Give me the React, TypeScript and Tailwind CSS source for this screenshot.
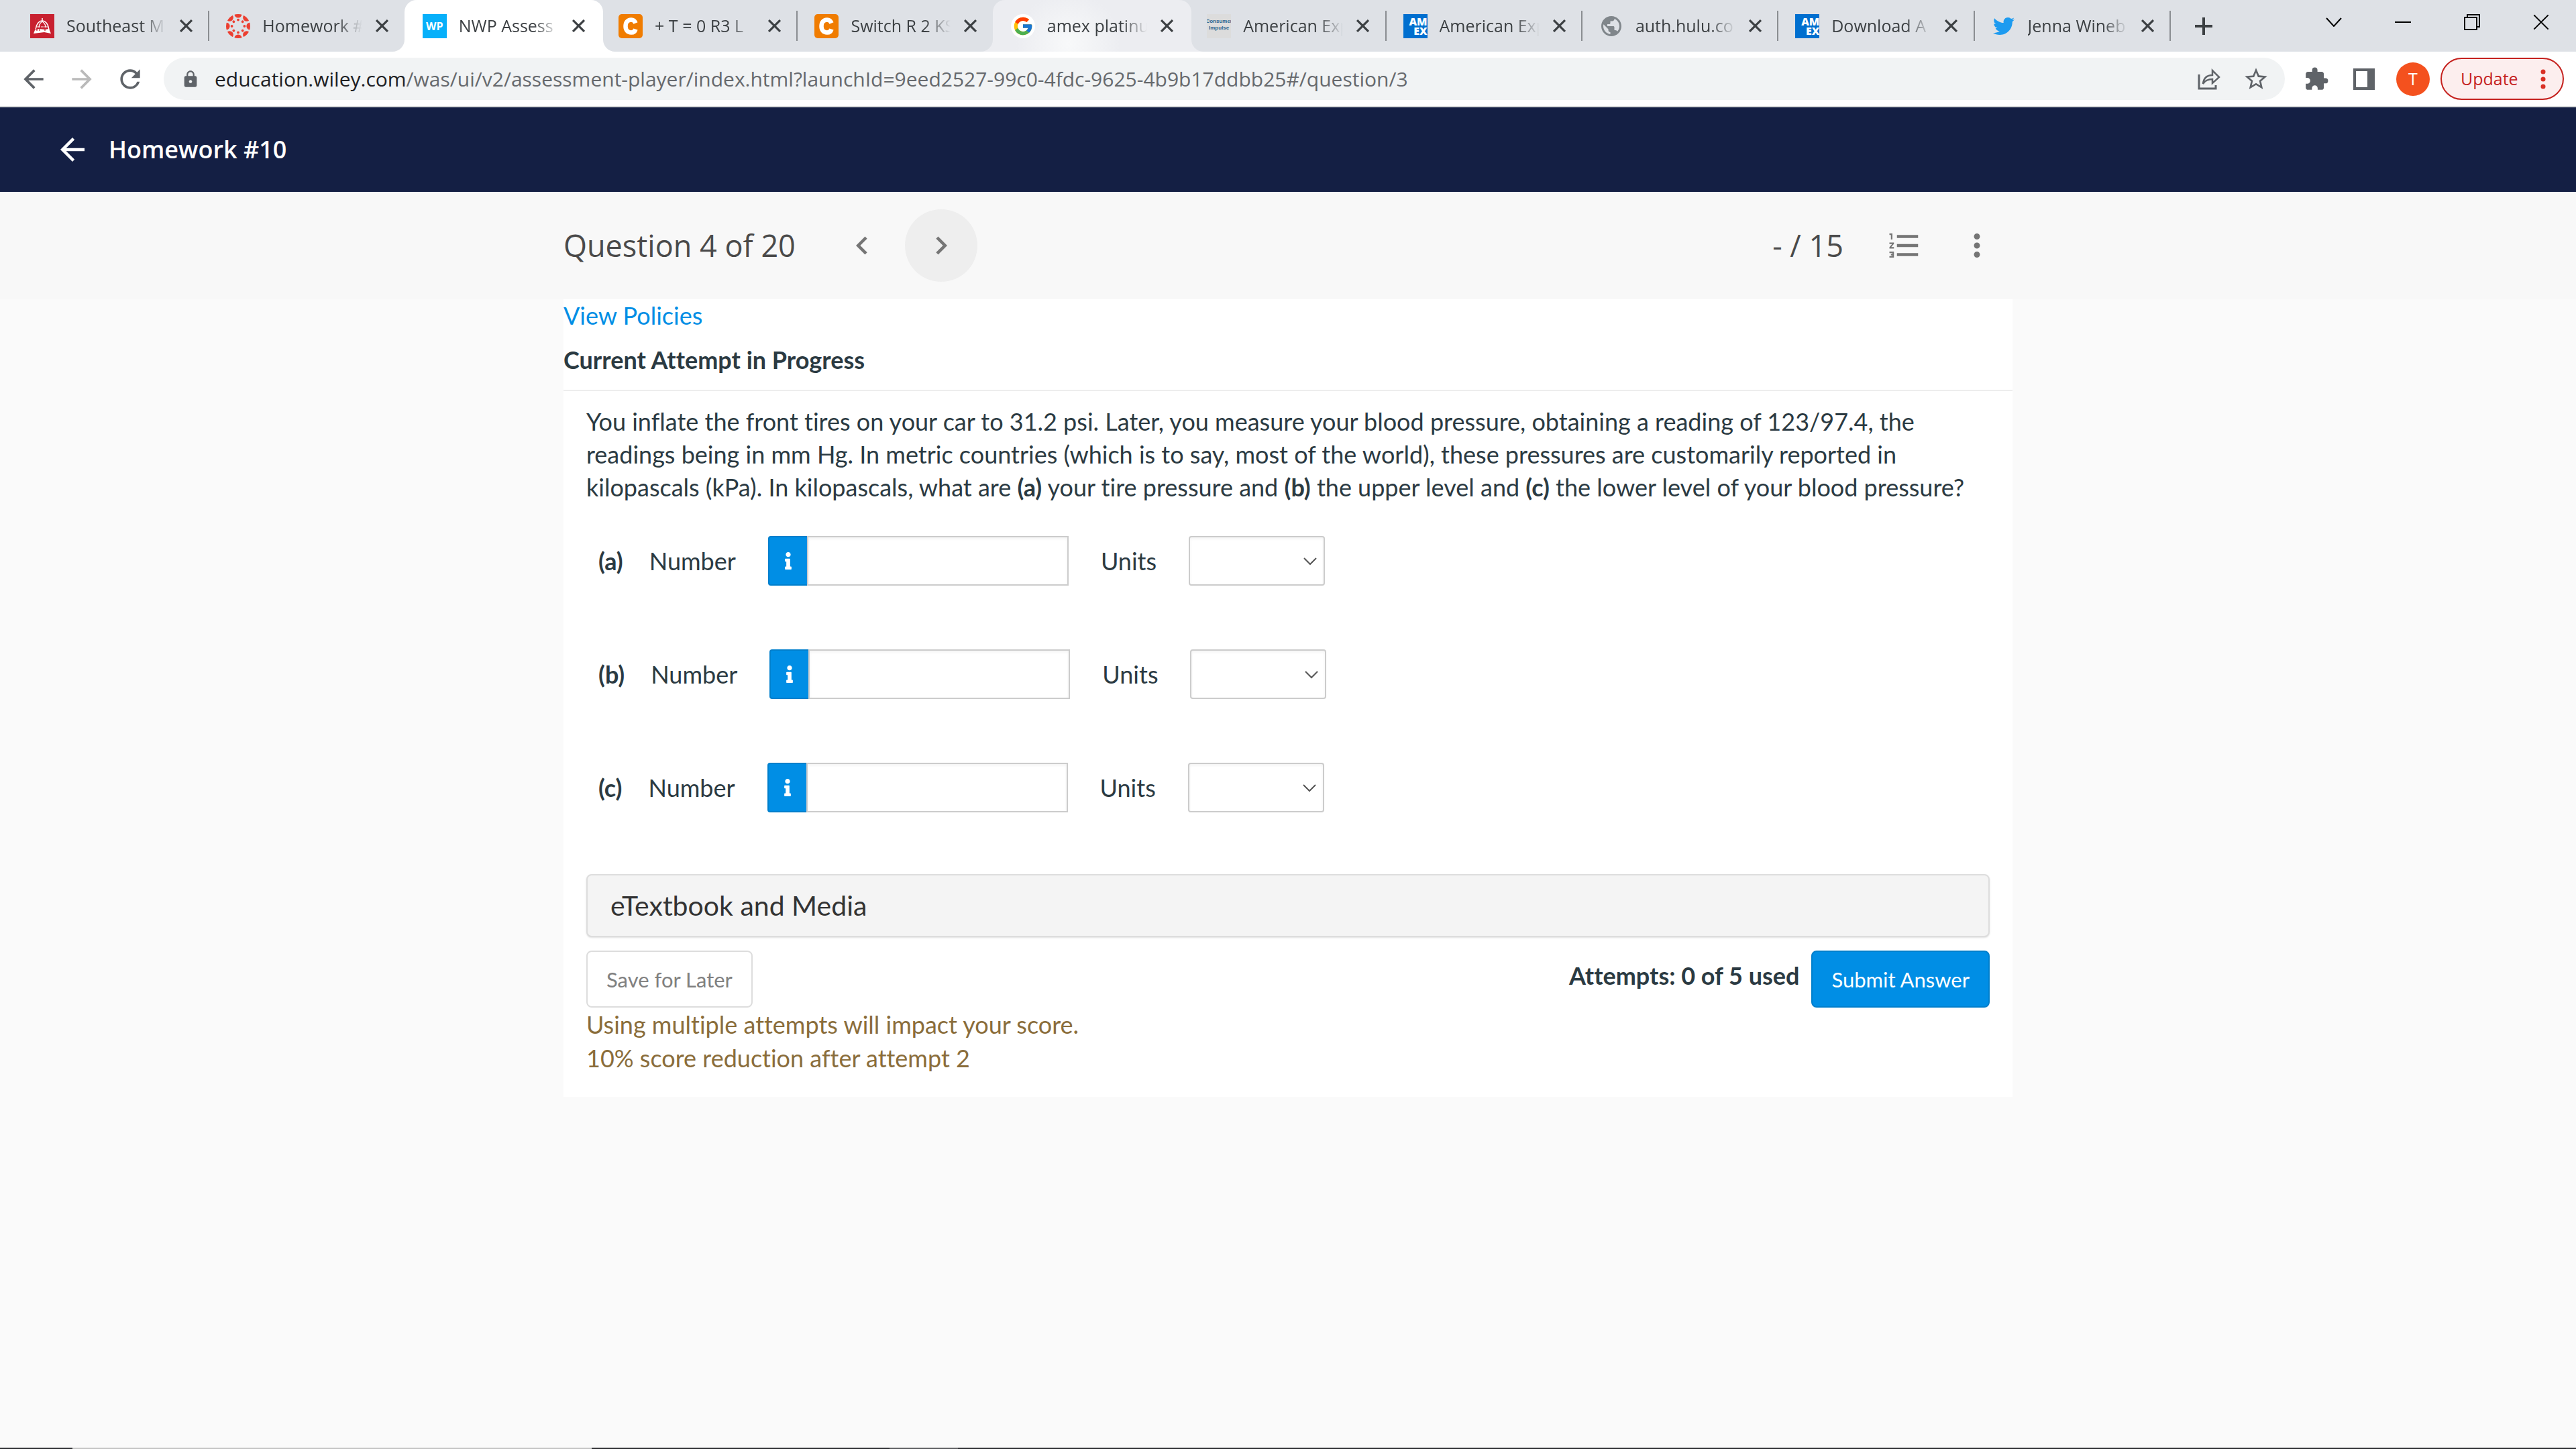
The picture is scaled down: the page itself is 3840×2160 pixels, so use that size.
import type {ReactNode} from 'react';
import {FaInfo, FaTwitter} from 'react-icons/fa';
import {FcGoogle} from 'react-icons/fc';
import {
  MdArrowBack,
  MdArrowForward,
  MdChevronLeft,
  MdChevronRight,
  MdExtension,
  MdFormatListNumbered,
  MdLock,
  MdMoreVert,
  MdPublic,
  MdRefresh,
  MdStarBorder,
} from 'react-icons/md';

type Tab = {title: string; icon: ReactNode; state?: 'active' | 'hover'; divider?: boolean};

function DomeIcon() {
  return (
    <svg viewBox="0 0 36 36" className="size-9">
      <rect width="36" height="36" fill="#c8202f" />
      <path d="M18 6v4M8 23c1-8 5-13 10-13s9 5 10 13" fill="none" stroke="#fff" strokeWidth="1.500" />
      <path d="M13 20c0-4 2-7 5-9 3 2 5 5 5 9M9 19h6M16 19h4M21 19h6" fill="none" stroke="#fff" strokeWidth="1.200" />
      <path d="M7 24l6-2 9 1 6-1 3 7-10-2-16 2z" fill="#fff" />
      <path d="M10 22v3M14 22v3M22 22v3" stroke="#c8202f" strokeWidth="1.200" />
    </svg>
  );
}

function CanvasIcon() {
  const angles = [0, 45, 90, 135, 180, 225, 270, 315];
  return (
    <svg viewBox="0 0 36 36" className="size-9" fill="#ec3e30">
      <clipPath id="canvas-disc">
        <circle cx="18" cy="18" r="18" />
      </clipPath>
      <g clipPath="url(#canvas-disc)">
        {angles.map((a) => (
          <circle key={a} cx="18" cy="0" r="5.6" transform={`rotate(${a} 18 18)`} />
        ))}
      </g>
      {angles.map((a) => (
        <circle key={a} cx="18" cy="8.6" r="1.9" transform={`rotate(${a} 18 18)`} />
      ))}
    </svg>
  );
}

function WileyIcon() {
  return <span className="flex size-9 items-center justify-center bg-[#07b0fa] text-base font-bold text-white">WP</span>;
}

function CheggIcon() {
  return (
    <svg viewBox="0 0 36 36" className="size-9">
      <rect width="36" height="36" rx="5" fill="#f07c00" />
      <path d="M25.500 13.500C24 9.500 21.500 8.500 19 8.500c-5.500 0-8.500 4-8.500 9.500s3 9.500 8.500 9.500c3.500 0 5.500-1.500 6.500-5" fill="none" stroke="#fff" strokeWidth="6.500" />
    </svg>
  );
}

function AmexIcon() {
  return (
    <span className="flex size-9 flex-col items-end justify-center overflow-hidden bg-[#006fcf] text-base leading-[14px] font-extrabold text-white">
      <span>AM</span>
      <span>EX</span>
    </span>
  );
}

function ConsumerIcon() {
  return (
    <span className="flex size-9 flex-col items-center overflow-hidden bg-[#dcdcdc] pt-1.5 font-['Liberation_Sans',sans-serif] text-[8px] leading-[10px] font-bold text-[#2a6590]">
      <span>Consumer</span>
      <span>Impulse</span>
    </span>
  );
}

const tabs: Tab[] = [
  {title: 'Southeast M', icon: <DomeIcon />, divider: true},
  {title: 'Homework #', icon: <CanvasIcon />},
  {title: 'NWP Assess', icon: <WileyIcon />, state: 'active'},
  {title: '+ T = 0 R3 L', icon: <CheggIcon />, divider: true},
  {title: 'Switch R 2 KS', icon: <CheggIcon />},
  {title: 'amex platinu', icon: <span className="flex size-9 items-center justify-center rounded-full bg-white"><FcGoogle className="size-8" /></span>, state: 'hover'},
  {title: 'American Exp', icon: <ConsumerIcon />, divider: true},
  {title: 'American Exp', icon: <AmexIcon />, divider: true},
  {title: 'auth.hulu.co', icon: <MdPublic className="size-9 text-[#80868b]" />, divider: true},
  {title: 'Download A', icon: <AmexIcon />, divider: true},
  {title: 'Jenna Wineb', icon: <FaTwitter className="size-8 text-[#1d9bf0]" />, divider: true},
];

function Cross({className}: {className: string}) {
  return (
    <svg viewBox="0 0 18 18" className={className} fill="none" stroke="currentColor">
      <path d="M1 1l16 16M17 1L1 17" />
    </svg>
  );
}

function BrowserTab({tab}: {tab: Tab}) {
  const foot = tab.state === 'active' ? 'text-white' : 'text-[#ecedf1]';
  return (
    <div className="relative flex h-full min-w-0 flex-1 items-center pl-[25px]">
      {tab.state && (
        <div className={`absolute inset-y-0 -inset-x-0.5 ${foot}`}>
          <div className={`size-full rounded-t-[18px] ${tab.state === 'active' ? 'bg-white' : 'bg-[#ecedf1] bg-radial-[circle_at_38%_85%] from-[#f8f9fa] to-[#ecedf1] to-40%'}`} />
          <svg viewBox="0 0 18 18" className="absolute bottom-0 -left-[18px] size-[18px]" fill="currentColor">
            <path d="M18 0v18H0C10 18 18 10 18 0z" />
          </svg>
          <svg viewBox="0 0 18 18" className="absolute bottom-0 -right-[18px] size-[18px]" fill="currentColor">
            <path d="M0 0v18h18C8 18 0 10 0 0z" />
          </svg>
        </div>
      )}
      <span className="relative flex w-9 shrink-0 justify-center">{tab.icon}</span>
      <span className="relative ml-[18px] w-[149px] shrink-0 overflow-hidden whitespace-nowrap text-[25px] text-[#3c4043] mask-r-from-75% mask-r-to-100%">
        {tab.title}
      </span>
      <button aria-label={`Close ${tab.title}`} className="relative ml-5 text-[#3c4043]">
        <Cross className="size-[19px] stroke-[3]" />
      </button>
      {tab.divider && <span className="absolute right-0 h-[45px] w-0.5 bg-[#8a8d91]" />}
    </div>
  );
}

function TabStrip() {
  return (
    <div className="flex h-[77px] items-center bg-[#dee1e6] pl-5">
      <div className="flex h-full w-full max-w-[3216px] items-center">
        {tabs.map((tab, i) => (
          <BrowserTab key={i} tab={tab} />
        ))}
      </div>
      <button aria-label="New tab" className="ml-9 shrink-0">
        <svg viewBox="0 0 26 26" className="size-[26px] stroke-[#3c4043] stroke-[4]">
          <path d="M13 0v26M0 13h26" />
        </svg>
      </button>
      <div className="mr-10 mb-3 ml-auto flex shrink-0 items-center gap-[79px] text-black">
        <button aria-label="Search tabs">
          <svg viewBox="0 0 24 14" className="h-3.5 w-6" fill="none" stroke="currentColor" strokeWidth="2">
            <path d="M1 1l11 12L23 1" />
          </svg>
        </button>
        <button aria-label="Minimize">
          <span className="block h-0.5 w-6 bg-black" />
        </button>
        <button aria-label="Restore">
          <svg viewBox="0 0 24 24" className="size-6" fill="none" stroke="currentColor" strokeWidth="2">
            <path d="M1 5h18v18H1zM5 5V1h18v18h-4" />
          </svg>
        </button>
        <button aria-label="Close window">
          <Cross className="size-6 stroke-[1.5]" />
        </button>
      </div>
    </div>
  );
}

function Toolbar() {
  return (
    <div className="flex h-[83px] items-center border-b-2 border-[#dadcdc] bg-white pr-[18px] pl-[28px] text-[#5f6368]">
      <button aria-label="Back">
        <MdArrowBack className="size-11" />
      </button>
      <button aria-label="Forward" className="ml-7 text-[#bababa]">
        <MdArrowForward className="size-11" />
      </button>
      <button aria-label="Reload" className="ml-7">
        <MdRefresh className="size-11" />
      </button>
      <div className="ml-7 flex h-[63px] min-w-0 flex-1 items-center rounded-full bg-[#f1f3f4] pr-[23px] pl-[26px]">
        <MdLock className="size-7 shrink-0" />
        <span className="ml-[22px] flex-1 truncate text-[30px] text-[#66696d]">
          <span className="text-[#202124]">education.wiley.com</span>
          /was/ui/v2/assessment-player/index.html?launchId=9eed2527-99c0-4fdc-9625-4b9b17ddbb25#/question/3
        </span>
        <button aria-label="Share">
          <svg viewBox="0 0 34 32" className="h-8 w-[34px]" fill="none" stroke="currentColor" strokeWidth="3">
            <path d="M2 9v21h25v-5" />
            <path d="M8 23c1-9 6-13 14-13V3l10 10-10 9v-6c-7 0-11 2-14 7z" strokeWidth="2.500" />
          </svg>
        </button>
        <button aria-label="Bookmark" className="ml-[33px]">
          <MdStarBorder className="size-10" />
        </button>
      </div>
      <button aria-label="Extensions" className="ml-7">
        <MdExtension className="size-[38px]" />
      </button>
      <button aria-label="Side panel" className="ml-9">
        <svg viewBox="0 0 32 32" className="size-8">
          <path d="M0 0h32v32H0zM4 4v24h17V4z" fill="currentColor" fillRule="evenodd" />
        </svg>
      </button>
      <button className="ml-8 size-[50px] rounded-full bg-[#f4511e] text-[25px] text-white">T</button>
      <button className="ml-4 flex h-[63px] w-[184px] items-center rounded-full border-2 border-[#c5221f] bg-[#fceeee] pl-7 text-[25px] text-[#c5221f]">
        Update
        <svg viewBox="0 0 8 30" className="ml-auto mr-[25px] h-[30px] w-2" fill="#d93025">
          <circle cx="4" cy="4" r="3.500" />
          <circle cx="4" cy="15" r="3.500" />
          <circle cx="4" cy="26" r="3.500" />
        </svg>
      </button>
    </div>
  );
}

function QuestionBar() {
  return (
    <div className="bg-[#f8f8f8]">
      <div className="mx-auto flex h-40 max-w-[2160px] items-center text-[45px] text-[#4a4a4a]">
        <h2>Question 4 of 20</h2>
        <button aria-label="Previous question" className="ml-[45px] flex size-[108px] items-center justify-center text-[#757575]">
          <MdChevronLeft className="size-[54px]" />
        </button>
        <button aria-label="Next question" className="ml-2.5 flex size-[108px] items-center justify-center rounded-full bg-[#eeeeee] text-[#757575]">
          <MdChevronRight className="size-[54px]" />
        </button>
        <span className="ml-auto">- / 15</span>
        <button aria-label="Question list" className="ml-16 text-[#757575]">
          <MdFormatListNumbered className="size-[54px]" />
        </button>
        <button aria-label="More options" className="mr-[26px] ml-[54px] text-[#757575]">
          <MdMoreVert className="size-[54px]" />
        </button>
      </div>
    </div>
  );
}

function AnswerRow({part}: {part: string}) {
  return (
    <div className="flex h-[74px] items-center">
      <span className="font-bold">({part})</span>
      <label htmlFor={`number-${part}`} className="ml-[39px]">Number</label>
      <button aria-label={`Help for part ${part}`} className="ml-12 flex h-full w-[58px] items-center justify-center rounded-l border-2 border-r-0 border-[#007fcc] bg-[#008ee5] text-white">
        <FaInfo className="size-[26px]" />
      </button>
      <input id={`number-${part}`} className="h-full w-[390px] border-2 border-[#cccccc] bg-white px-4 inset-shadow-sm outline-none" />
      <label htmlFor={`units-${part}`} className="ml-12">Units</label>
      <span className="relative ml-12 h-full">
        <select id={`units-${part}`} className="h-full w-[203px] appearance-none rounded border-2 border-[#cccccc] bg-white px-4 inset-shadow-sm outline-none">
          <option></option>
          <option>kPa</option>
        </select>
        <svg viewBox="0 0 20 12" className="pointer-events-none absolute top-8 right-3 h-3 w-5" fill="none" stroke="#555" strokeWidth="2">
          <path d="M1 1l9 9 9-9" />
        </svg>
      </span>
    </div>
  );
}

function QuestionCard() {
  return (
    <main className="mx-auto w-full max-w-[2160px] bg-white pb-[33px] font-[Lato,sans-serif] text-4xl leading-[50px] text-[#2b3a42] [font-variant-ligatures:none]">
      <a href="#policies" className="block leading-[48px] text-[#008ee5]">View Policies</a>
      <h3 className="mt-[17px] border-b-2 border-[#ededed] pb-5 font-bold">Current Attempt in Progress</h3>
      <div className="px-[34px]">
        <p className="mt-[21px] leading-[49px]">
          You inflate the front tires on your car to 31.2 psi. Later, you measure your blood pressure, obtaining a reading of 123/97.4, the
          readings being in mm Hg. In metric countries (which is to say, most of the world), these pressures are customarily reported in
          kilopascals (kPa). In kilopascals, what are <b>(a)</b> your tire pressure and <b>(b)</b> the upper level and <b>(c)</b> the lower
          level of your blood pressure?
        </p>
        <div className="mt-12 flex flex-col gap-[95px] pl-[18px]">
          <AnswerRow part="a" />
          <AnswerRow part="b" />
          <AnswerRow part="c" />
        </div>
        <button className="mt-[92px] block h-[94px] w-full rounded-lg border-2 border-[#dddddd] bg-[#f4f4f4] px-[34px] text-left text-[41px] text-[#333333] shadow-sm">
          eTextbook and Media
        </button>
        <div className="mt-5 flex items-start">
          <button className="h-[85px] rounded-lg border-2 border-[#dddddd] px-7 text-[31px] text-[#808080]">Save for Later</button>
          <span className="mt-3 ml-auto font-bold">Attempts: 0 of 5 used</span>
          <button className="ml-[18px] h-[85px] rounded-lg border-2 border-[#007fcc] bg-[#008ee5] px-7 text-[31px] text-white">Submit Answer</button>
        </div>
        <p className="text-[#8a6d3b]">
          Using multiple attempts will impact your score.
          <br />
          10% score reduction after attempt 2
        </p>
      </div>
    </main>
  );
}

export default function App() {
  return (
    <div className="flex min-h-screen flex-col bg-[#fafafa] font-['Open_Sans',sans-serif]">
      <TabStrip />
      <Toolbar />
      <header className="flex h-[126px] items-center bg-[#141f44] pl-[81px] text-white">
        <button aria-label="Back to assignments">
          <MdArrowBack className="size-[54px]" />
        </button>
        <h1 className="ml-[27px] text-4xl font-semibold">Homework #10</h1>
      </header>
      <QuestionBar />
      <QuestionCard />
      <footer className="mt-auto flex h-0.5 bg-[#2f3034]">
        <span className="ml-[108px] w-[774px] bg-[#c4c4c4]" />
        <span className="ml-[444px] w-[102px] bg-[#5c5d60]" />
      </footer>
    </div>
  );
}
